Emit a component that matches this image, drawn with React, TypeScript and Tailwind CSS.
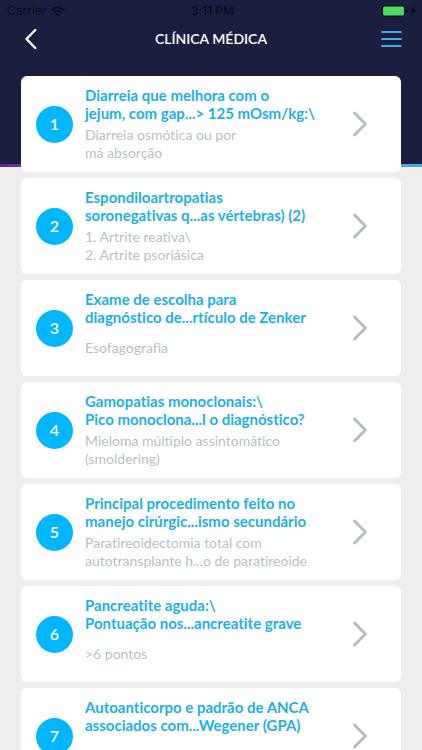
type Card = { title: [string, string]; answer: string[] };

const cards: Card[] = [
  { title: ["Diarreia que melhora com o", "jejum, com gap...> 125 mOsm/kg:\\"], answer: ["Diarreia osmótica ou por", "má absorção"] },
  { title: ["Espondiloartropatias", "soronegativas q...as vértebras) (2)"], answer: ["1. Artrite reativa\\", "2. Artrite psoriásica"] },
  { title: ["Exame de escolha para", "diagnóstico de...rtículo de Zenker"], answer: ["Esofagografia"] },
  { title: ["Gamopatias monoclonais:\\", "Pico monoclona...l o diagnóstico?"], answer: ["Mieloma múltiplo assintomático", "(smoldering)"] },
  { title: ["Principal procedimento feito no", "manejo cirúrgic...ismo secundário"], answer: ["Paratireoidectomia total com", "autotransplante h...o de paratireoide"] },
  { title: ["Pancreatite aguda:\\", "Pontuação nos...ancreatite grave"], answer: [">6 pontos"] },
  { title: ["Autoanticorpo e padrão de ANCA", "associados com...Wegener (GPA)"], answer: [] },
];

function StatusBar() {
  return (
    <div className="grid h-[22px] grid-cols-3 items-center pr-1 pl-[7px] font-['Inter',sans-serif] text-xs text-[#080a14]">
      <div className="flex items-center gap-[5px]">
        <span>Carrier</span>
        <svg width="14" height="11" viewBox="0 0 14 11" fill="none" stroke="currentColor" strokeWidth="2" aria-hidden="true">
          <path d="M.8 4.1a8.8 8.8 0 0 1 12.4 0" />
          <path d="M3.1 6.6a5.6 5.6 0 0 1 7.8 0" />
          <path d="M7 10.6 4.8 8.4a3.1 3.1 0 0 1 4.4 0Z" fill="currentColor" stroke="none" />
        </svg>
      </div>
      <span className="text-center font-medium">3:11 PM</span>
      <svg className="justify-self-end" width="36" height="12" viewBox="0 0 36 12" aria-hidden="true">
        <rect x=".5" y="1" width="22" height="10" rx="2" fill="#4cd964" stroke="#080a14" />
        <path d="M24.3 4.2c1.6.7 1.6 2.9 0 3.6Z" fill="#080a14" />
        <path d="M32.6.8 28.4 6.8h2.4L29.8 11l4.4-6h-2.5Z" fill="#080a14" />
      </svg>
    </div>
  );
}

function CardRow({ card, index }: { card: Card; index: number }) {
  return (
    <li>
      <button type="button" className="flex h-24 w-full items-center rounded-md bg-white pr-[33px] pl-[15px] text-left">
        <span className="flex size-[37px] shrink-0 items-center justify-center rounded-full bg-[#00b7ff] text-base font-semibold text-white">
          {index + 1}
        </span>
        <span className="ml-3 flex h-full min-w-0 flex-1 flex-col pt-[10px] whitespace-nowrap">
          <span className="text-[15px] leading-[18px] font-bold text-[#1db0e8]">
            {card.title[0]}
            <br />
            {card.title[1]}
          </span>
          <span className="mt-1 flex h-9 flex-col justify-center text-sm leading-[18px] text-[#b5bfc6]">
            {card.answer.map((line) => (
              <span key={line}>{line}</span>
            ))}
          </span>
        </span>
        <svg className="shrink-0" width="16" height="26" viewBox="0 0 16 26" fill="none" stroke="#b3bcc2" strokeWidth="2.8" strokeLinecap="round" strokeLinejoin="round" aria-hidden="true">
          <path d="m2.5 2 11 11-11 11" />
        </svg>
      </button>
    </li>
  );
}

export default function App() {
  return (
    <div className="h-screen overflow-hidden bg-[#eeeeee] font-['Lato',sans-serif] [font-variant-ligatures:none]">
      <header className="flex h-[167px] flex-col bg-[#1b1f3f]">
        <StatusBar />
        <div className="flex items-center justify-between px-5 pt-[5px]">
          <button type="button" aria-label="Voltar" className="flex h-6 w-6 items-center justify-start pl-1">
            <svg width="14" height="22" viewBox="0 0 14 22" fill="none" stroke="#fff" strokeWidth="2.4" strokeLinecap="round" strokeLinejoin="round" aria-hidden="true">
              <path d="M11.3 2 2.5 11l8.8 9" />
            </svg>
          </button>
          <h1 className="text-sm leading-6 font-semibold text-white">CLÍNICA MÉDICA</h1>
          <button type="button" aria-label="Menu" className="flex h-6 w-6 items-center justify-end">
            <svg width="21" height="18" viewBox="0 0 21 18" stroke="#4aa9e9" strokeWidth="2.2" strokeLinecap="round" aria-hidden="true">
              <path d="M1.2 2h18.6M1.2 9h18.6M1.2 16h18.6" />
            </svg>
          </button>
        </div>
        <div className="mt-auto h-[3px] bg-linear-to-r from-[#6c1fa5] to-[#42ade8]" />
      </header>
      <main className="relative -mt-[91px] px-[21px]">
        <ol className="flex flex-col gap-[6px]">
          {cards.map((card, i) => (
            <CardRow key={card.title[0]} card={card} index={i} />
          ))}
        </ol>
      </main>
    </div>
  );
}
